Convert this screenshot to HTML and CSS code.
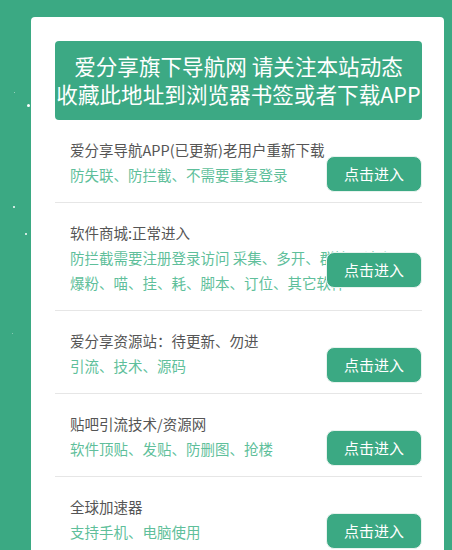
FILE: index.html
```html
<!DOCTYPE html>
<html lang="zh-CN">
<head>
<meta charset="utf-8">
<title>爱分享导航</title>
<link rel="stylesheet" href="styles.css">
</head>
<body>
<div class="dots">
  <span class="dot d1"></span>
  <span class="dot d2"></span>
  <span class="dot d3"></span>
  <span class="dot d4"></span>
  <span class="dot d5"></span>
</div>
<main class="card">
  <div class="notice">爱分享旗下导航网 请关注本站动态<br>收藏此地址到浏览器书签或者下载APP</div>
  <ul class="list">
    <li class="item">
      <div class="title">爱分享导航APP(已更新)老用户重新下载</div>
      <div class="desc">防失联、防拦截、不需要重复登录</div>
      <a class="btn">点击进入</a>
    </li>
    <li class="item">
      <div class="title">软件商城:正常进入</div>
      <div class="desc">防拦截需要注册登录访问 采集、多开、群控、计步、爆粉、喵、挂、耗、脚本、订位、其它软件</div>
      <a class="btn">点击进入</a>
    </li>
    <li class="item">
      <div class="title">爱分享资源站：待更新、勿进</div>
      <div class="desc">引流、技术、源码</div>
      <a class="btn">点击进入</a>
    </li>
    <li class="item">
      <div class="title">贴吧引流技术/资源网</div>
      <div class="desc">软件顶贴、发贴、防删图、抢楼</div>
      <a class="btn">点击进入</a>
    </li>
    <li class="item">
      <div class="title">全球加速器</div>
      <div class="desc">支持手机、电脑使用</div>
      <a class="btn">点击进入</a>
    </li>
  </ul>
</main>
</body>
</html>
```
FILE: styles.css
```css
html, body {
  margin: 0;
  padding: 0;
}
body {
  background: #3ba983;
  font-family: "Noto Sans CJK SC", "Noto Sans", sans-serif;
  overflow: hidden;
  height: 550px;
  position: relative;
}
.dots {
  position: absolute;
  left: 0;
  top: 0;
  width: 32px;
  height: 550px;
}
.dot {
  position: absolute;
  background: #fff;
  border-radius: 50%;
}
.d1 { left: 27px; top: 104px; width: 3px; height: 3px; }
.d2 { left: 13px; top: 206px; width: 2px; height: 2px; }
.d3 { left: 25px; top: 233px; width: 2px; height: 2px; }
.d4 { left: 12px; top: 333px; width: 1px; height: 1px; opacity: .5; }
.d5 { left: 14px; top: 92px; width: 1px; height: 1px; opacity: .6; }

.card {
  margin: 17px 0 0 31px;
  width: 413px;
  box-sizing: border-box;
  background: #fff;
  border-radius: 4px;
  padding: 24px 22px 40px 24px;
  min-height: 600px;
}
.notice {
  background: #3ca984;
  color: #fff;
  border-radius: 4px;
  text-align: center;
  font-size: 21.6px;
  line-height: 28px;
  padding: 11px 0 12px;
  white-space: nowrap;
}
.list {
  list-style: none;
  margin: 0;
  padding: 0;
}
.item {
  position: relative;
  padding: 17px 0 15px 15px;
  border-bottom: 1px solid #e6e6e6;
}
.title {
  font-size: 14.5px;
  line-height: 25px;
  color: #555;
}
.desc {
  font-size: 14.5px;
  line-height: 25px;
  color: #5fbf9b;
  padding-right: 12px;
}
.btn {
  position: absolute;
  right: 0;
  top: 50%;
  margin-top: -5px;
  width: 96px;
  height: 36px;
  box-sizing: border-box;
  border: 1px solid #e8f3ee;
  background: #3ba983;
  color: #fff;
  border-radius: 8px;
  font-size: 15px;
  line-height: 34px;
  text-align: center;
}
```
